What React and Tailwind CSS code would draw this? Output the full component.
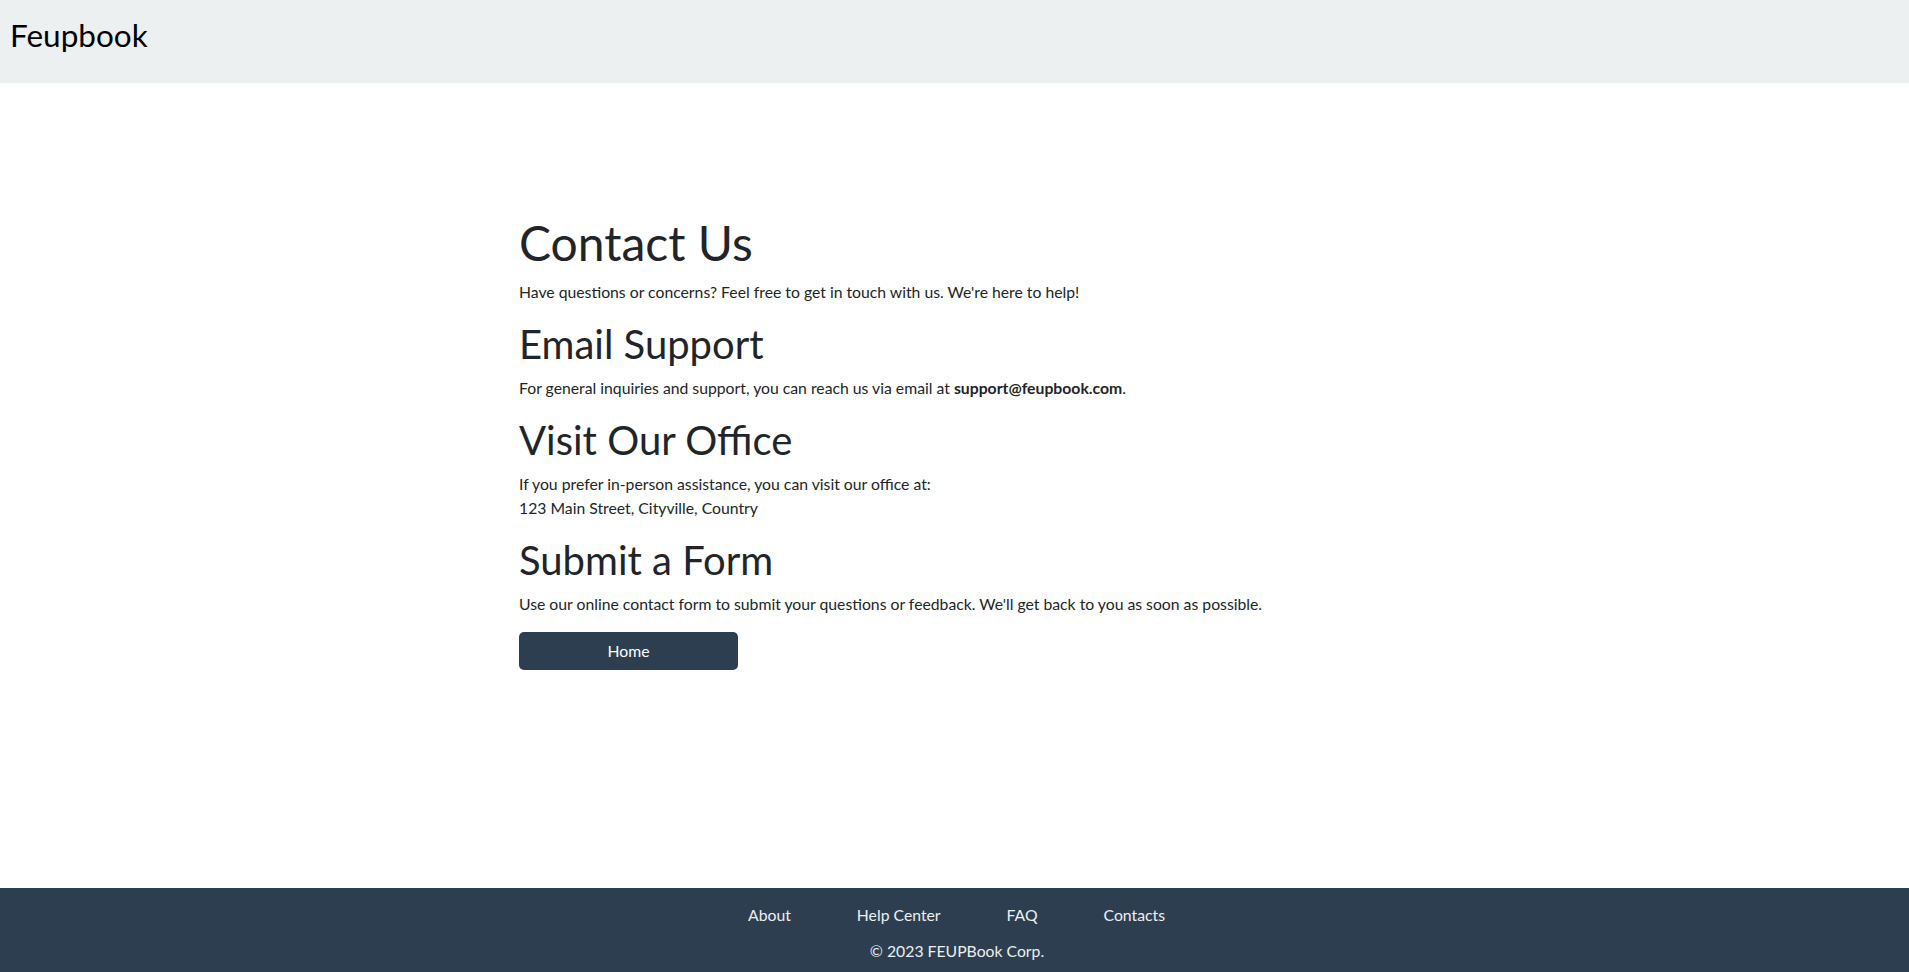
import React from "react";

const links = ["About", "Help Center", "FAQ", "Contacts"];

export default function App() {
  return (
    <div className="h-screen flex flex-col bg-white text-[#212529] font-['Lato',_'Noto_Sans',_sans-serif]">
      <header className="h-[83px] shrink-0 bg-[#ecf0f1] pl-[10px] pt-[17px]">
        <a href="#" className="text-[31.5px] leading-[1.2] text-black">
          Feupbook
        </a>
      </header>

      <main className="flex-1">
        <div className="mx-auto w-[871px] pt-[131px] text-[15.75px] leading-[24px]">
          <h1 className="text-[48px] leading-[1.2] mb-2">Contact Us</h1>
          <p className="mb-4">
            Have questions or concerns? Feel free to get in touch with us. We're here to help!
          </p>

          <h2 className="text-[40px] leading-[1.2] mb-2">Email Support</h2>
          <p className="mb-4">
            For general inquiries and support, you can reach us via email at{" "}
            <strong className="font-bold">support@feupbook.com</strong>.
          </p>

          <h2 className="text-[40px] leading-[1.2] mb-2">Visit Our Office</h2>
          <p className="mb-4">
            If you prefer in-person assistance, you can visit our office at:
            <br />
            123 Main Street, Cityville, Country
          </p>

          <h2 className="text-[40px] leading-[1.2] mb-2">Submit a Form</h2>
          <p className="mb-4">
            Use our online contact form to submit your questions or feedback. We'll get back to you as soon as possible.
          </p>

          <button className="w-[219px] h-[38px] rounded-[5px] bg-[#2c3e50] text-white text-[15.75px]">
            Home
          </button>
        </div>
      </main>

      <footer className="h-[84px] shrink-0 bg-[#2c3e50] text-[#ecf0f1] pt-[15px] text-[15.75px] leading-[24px]">
        <ul className="flex justify-center pl-[4px]">
          {links.map((l) => (
            <li key={l} className="px-[33px]">
              <a href="#">{l}</a>
            </li>
          ))}
        </ul>
        <p className="mt-3 text-center pl-[5px]">© 2023 FEUPBook Corp.</p>
      </footer>
    </div>
  );
}
